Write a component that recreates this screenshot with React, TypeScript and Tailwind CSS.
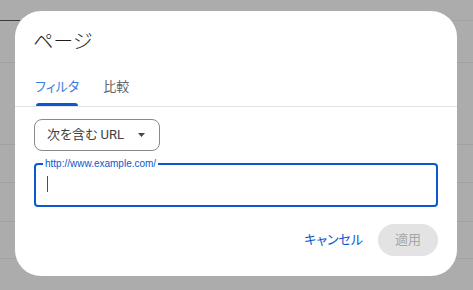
import React from 'react'

const font = { fontFamily: "Roboto, 'Noto Sans CJK JP', sans-serif" }

function BackdropRows() {
  // faint table rows behind the scrim
  return (
    <div className="absolute inset-0">
      <div className="absolute left-0 top-[20px] h-px w-[20px] bg-[#3a3a3a]" />
      <div className="absolute left-[20px] right-0 top-[20px] h-px bg-[#a3a3a3]" />
      {[62, 144, 182, 221, 258].map((y) => (
        <div key={y} className="absolute left-0 right-0 h-px bg-[#a1a1a1]" style={{ top: y }} />
      ))}
    </div>
  )
}

export default function App() {
  return (
    <div
      className="relative h-[290px] w-[473px] overflow-hidden bg-[#acacac] [font-feature-settings:'palt']"
      style={font}
    >
      <BackdropRows />
      <div className="relative ml-[15px] mt-[11px] flex h-[265px] w-[442px] flex-col rounded-[26px] bg-white">
        <h2 className="pl-[18px] pt-[17px] text-[20px] leading-[28px] font-light text-[#1f1f1f]">ページ</h2>

        <div className="mt-[21px] flex gap-[24px] border-b border-[#e3e3e3] pl-[20px]">
          <div className="flex flex-col items-center">
            <span className="text-[13px] leading-[20px] text-[#3b7de0]">フィルタ</span>
            <div className="mt-[6px] h-[3px] w-[42px] rounded-t-[3px] bg-[#0b57d0]" />
          </div>
          <span className="text-[13px] leading-[20px] text-[#5f6368]">比較</span>
        </div>

        <div className="mt-[12px] pl-[19px]">
          <div className="flex h-[32px] w-[126px] items-center justify-between rounded-[8px] border border-[#8a8a8a] pl-[12px] pr-[14px]">
            <span className="text-[13px] text-[#3c4043]">次を含む URL</span>
            <svg width="7" height="4" viewBox="0 0 7 4">
              <path d="M0 0 L7 0 L3.5 4 Z" fill="#444746" />
            </svg>
          </div>
        </div>

        <div className="relative mx-[19px] mt-[12px] h-[44px] rounded-[4px] border-2 border-[#0b57d0]">
          <span
            className="absolute left-[7px] top-[-7px] bg-white px-[2px] text-[10px] leading-[12px] text-[#0b57d0]"
            style={{ fontFamily: "'Liberation Sans', Arial, sans-serif" }}
          >
            http://www.example.com/
          </span>
          <div className="ml-[11px] mt-[11px] h-[16px] w-px bg-[#0b57d0]" />
        </div>

        <div className="mt-[17px] flex items-center justify-end gap-[15px] pr-[19px]">
          <span className="text-[13px] text-[#0b57d0]">キャンセル</span>
          <div className="flex h-[32px] w-[60px] items-center justify-center rounded-full bg-[#e3e3e3]">
            <span className="text-[13px] text-[#a6a6a6]">適用</span>
          </div>
        </div>
      </div>
    </div>
  )
}
